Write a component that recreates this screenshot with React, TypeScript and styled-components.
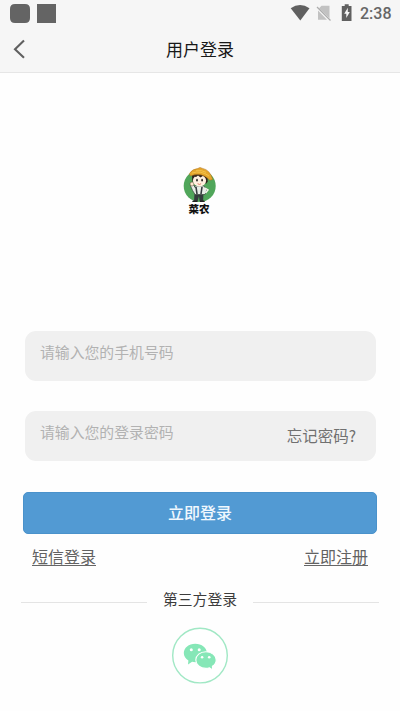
import React from "react";
import styled, { createGlobalStyle } from "styled-components";

const Global = createGlobalStyle`
  * { box-sizing: border-box; }
  body { margin: 0; background: #fff; font-family: Roboto, "Noto Sans CJK SC", sans-serif; }
`;
const Screen = styled.main`
  width: 400px;
  height: 711px;
  display: flex;
  flex-direction: column;
  background: #fefefe;
  overflow: hidden;
`;
const Header = styled.header`
  height: 73px;
  background: #f6f6f6;
  border-bottom: 1px solid #e6e6e6;
`;
const StatusBar = styled.div`
  height: 26px;
  display: flex;
  justify-content: space-between;
`;
const Clock = styled.time`
  width: 40px;
  padding-top: 1px;
  font: 500 16px/26px Roboto, sans-serif;
  color: #666;
`;
const StatusRight = styled.div`
  display: flex;
`;
const TitleBar = styled.div`
  height: 46px;
  display: grid;
  grid-template-columns: 40px 1fr 40px;
`;
const BackButton = styled.button`
  padding: 0;
  border: 0;
  background: none;
  display: block;
  height: 46px;
`;
const Title = styled.h1`
  margin: 0;
  text-align: center;
  font: 400 17px/46px "Noto Sans CJK SC", sans-serif;
  color: #181818;
`;
const Brand = styled.div`
  height: 258px;
  padding-top: 94px;
  display: flex;
  flex-direction: column;
  align-items: center;
`;
const BrandName = styled.div`
  margin: -1px 2px 0 0;
  font: 900 10.5px/12px "Noto Sans CJK SC", sans-serif;
  color: #111;
`;
const Form = styled.form`
  display: flex;
  flex-direction: column;
  gap: 30px;
  margin: 0 24px 0 25px;
`;
const Field = styled.div`
  height: 50px;
  padding: 0 20px 0 15px;
  border-radius: 11px;
  background: #f0f0f0;
  display: flex;
  justify-content: space-between;
`;
const Hint = styled.span`
  font: 400 14.85px/42px "Noto Sans CJK SC", sans-serif;
  color: #b2b2b2;
`;
const Forgot = styled.a`
  font: 400 15.5px/48px "Noto Sans CJK SC", sans-serif;
  color: #707070;
`;
const Submit = styled.button`
  height: 42px;
  margin: 1px -1px 0 -2px;
  padding: 0 0 2px;
  border: 1px solid #4a92cb;
  border-radius: 5px;
  background: #529ad3;
  color: #f0f8fe;
  font: 500 16px/38px "Noto Sans CJK SC", sans-serif;
`;
const Links = styled.nav`
  display: flex;
  justify-content: space-between;
  padding: 12px 32px 0;
  height: 54px;
`;
const TextLink = styled.a`
  height: 20px;
  font: 400 16px/21px "Noto Sans CJK SC", sans-serif;
  color: #626262;
  border-bottom: 1px solid #666;
`;
const Divider = styled.div`
  display: flex;
  align-items: center;
  gap: 16px;
  height: 24px;
  margin: 0 21px;
  font: 400 14.8px/24px "Noto Sans CJK SC", sans-serif;
  color: #3c3c3c;
`;
const DividerLabel = styled.span`
  height: 26px;
`;
const Rule = styled.span`
  flex: 1;
  height: 1px;
  margin-top: 5px;
  background: #e4e4e4;
`;
const Social = styled.div`
  display: flex;
  justify-content: center;
  padding-top: 15px;
`;

const AppIcons = () => (
  <svg width="70" height="26">
    <path d="M15 4h10q5 0 5 5v9q0 5-5 5H15q-5 0-5-5V9q0-5 5-5z" fill="#646464" />
    <rect x="37" y="4" width="19" height="19" fill="#646464" />
  </svg>
);

const DeviceIcons = () => (
  <svg width="70" height="26">
    <path d="M.7 8.3Q10 1.8 19.5 8.3L10.3 20.4Z" fill="#606060" />
    <path d="M31.5 5.7h8v12.5L29 8.2zM28 10.5l9 9.2h-9z" fill="#c2c2c2" />
    <path d="M27 7l13.5 13.5" stroke="#adadad" strokeWidth="1.2" />
    <path d="M54.7 4.2h4v1.7h2.8v15h-9.7v-15h2.9z" fill="#606060" />
    <path d="M57.8 7.8l-3.6 5.9h2.1v4.2l3.5-6h-2z" fill="#f6f6f6" />
  </svg>
);

const Farmer = () => (
  <svg width="34" height="37" viewBox="0 0 34 37">
    <circle cx="16.7" cy="19" r="16" fill="#50a65a" />
    <path d="M11.5 26h9l-.4 8h-3.5L16 29l-1.5 5.5H11z" fill="#343b3d" />
    <path d="M10 33.5h4.5v1.6H9zm7 0h4l1 1.6h-5z" fill="#222" />
    <path d="M11.5 19h9.5l3 4-2 4.5H12l-2.4-4-2.3-5 2.5-1.6 2.7 4z" fill="#e8eee7" stroke="#35433a" strokeWidth=".7" />
    <path d="M13 20l1 7m5-7-1 7" stroke="#343b3d" strokeWidth="1.6" />
    <path d="M22 21l3 2-2.5 3" fill="none" stroke="#f6f6ed" strokeWidth="1.5" />
    <circle cx="9" cy="17" r="2" fill="#ffe8cb" stroke="#554235" strokeWidth=".5" />
    <path d="M9 6Q17 2 24.5 8l.2 6.5-1.3 2H10.8l-1.6-3z" fill="#30231b" />
    <ellipse cx="16.5" cy="13.6" rx="6.6" ry="5.9" fill="#fff0df" />
    <path d="M10 9l3 1 2-1.6 2.5 2 2.6-1.7 4 3-.4-4.7H10z" fill="#30231b" />
    <path d="M6.5 6.4Q9 2 14.7 1.5L17 .5l2.6.9q7.2 1.3 10.2 11l-3 .8Q19 4.8 7.4 9z" fill="#e5a62c" stroke="#ac711b" strokeWidth=".5" />
    <path d="M9 6q9-3 17 3M13 3.7q6-.8 10 1.6" fill="none" stroke="#f6c951" strokeWidth=".8" />
    <ellipse cx="14" cy="13.2" rx=".8" ry="1.4" fill="#231f20" />
    <ellipse cx="19.1" cy="13.2" rx=".8" ry="1.4" fill="#231f20" />
    <path d="M14.6 16.7q2 1.5 3.5 0" fill="none" stroke="#d4604d" strokeWidth=".8" />
  </svg>
);

const WeChat = () => (
  <svg width="58" height="58" viewBox="0 0 58 58">
    <circle cx="29" cy="28.6" r="27.3" fill="#fff" stroke="#a1e8c5" strokeWidth="1.4" />
    <path d="M24.2 16.7c-6.4 0-11.4 4.1-11.4 9.3 0 3.1 1.8 5.8 4.6 7.5l-.4 4 4.1-2.7q1.7.4 3.4.4c6.3 0 11.3-4.1 11.3-9.3s-5-9.2-11.6-9.2z" fill="#86e7b7" />
    <circle cx="20.3" cy="22.8" r="1.5" fill="#fff" />
    <circle cx="28.2" cy="22.8" r="1.5" fill="#fff" />
    <path d="M34.9 24.7c-5.7 0-10.1 3.7-10.1 8.3 0 4.7 4.4 8.4 10.1 8.4q1.9 0 3.6-.6l3.1 2.1-.2-3.6c2.4-1.5 3.8-3.8 3.8-6.3 0-4.6-4.6-8.3-10.3-8.3z" fill="#86e7b7" stroke="#fff" strokeWidth="1.1" />
    <circle cx="31.1" cy="30.3" r="1.3" fill="#fff" />
    <circle cx="38.2" cy="30.3" r="1.3" fill="#fff" />
  </svg>
);

export default function App() {
  return (
    <Screen>
      <Global />
      <Header>
        <StatusBar>
          <AppIcons />
          <StatusRight>
            <DeviceIcons />
            <Clock>2:38</Clock>
          </StatusRight>
        </StatusBar>
        <TitleBar>
          <BackButton aria-label="返回">
            <svg width="40" height="46">
              <path d="M24 14.5l-9 8.8 9 8.5" fill="none" stroke="#606060" strokeWidth="2.1" />
            </svg>
          </BackButton>
          <Title>用户登录</Title>
        </TitleBar>
      </Header>
      <Brand>
        <Farmer />
        <BrandName>菜农</BrandName>
      </Brand>
      <Form>
        <Field><Hint>请输入您的手机号码</Hint></Field>
        <Field>
          <Hint>请输入您的登录密码</Hint>
          <Forgot>忘记密码?</Forgot>
        </Field>
        <Submit type="button">立即登录</Submit>
      </Form>
      <Links>
        <TextLink>短信登录</TextLink>
        <TextLink>立即注册</TextLink>
      </Links>
      <Divider>
        <Rule />
        <DividerLabel>第三方登录</DividerLabel>
        <Rule />
      </Divider>
      <Social><WeChat /></Social>
    </Screen>
  );
}
